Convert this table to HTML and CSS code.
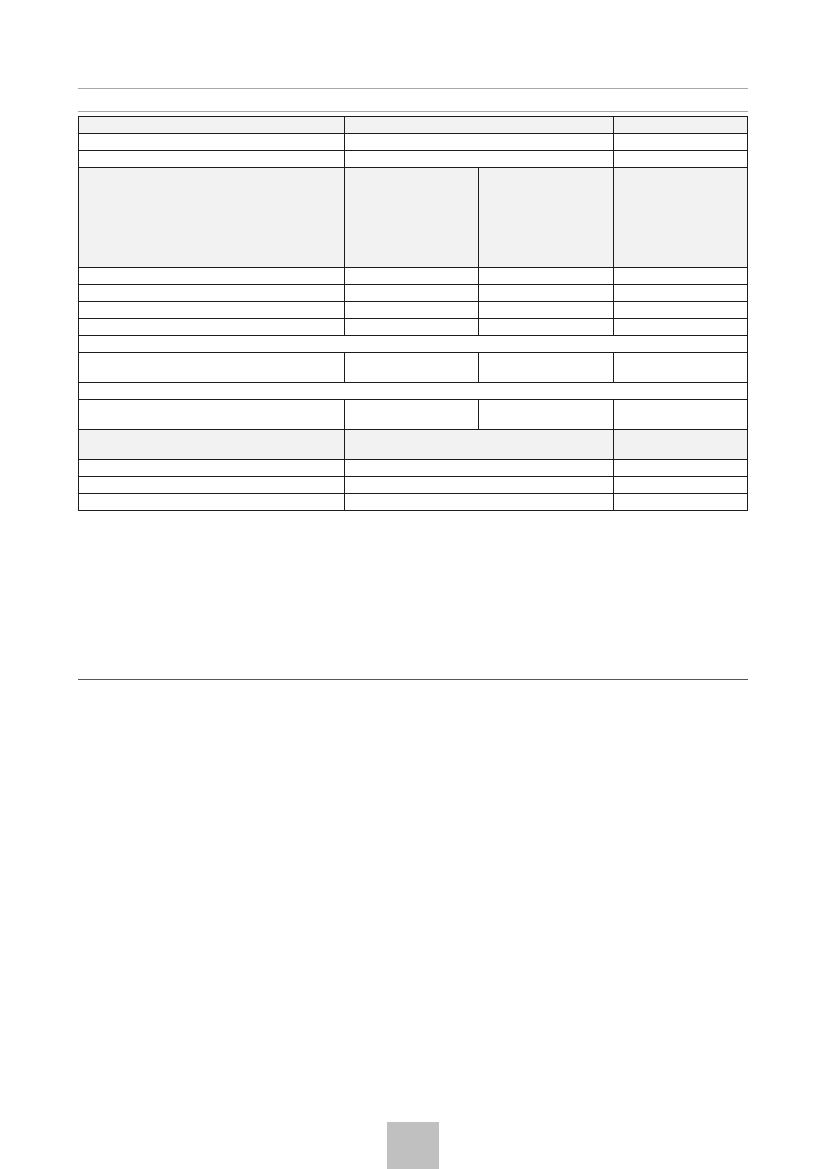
FILE: index.html
```html
<!DOCTYPE html>
<html>
<head>
<meta charset="utf-8">
<link rel="stylesheet" href="styles.css">
</head>
<body>
<div class="page">
  <div class="rule rule-top"></div>
  <div class="rule rule-second"></div>
  <div class="sheet">
    <div class="cell shade"></div><div class="cell shade span2"></div><div class="cell shade"></div>
    <div class="cell"></div><div class="cell span2"></div><div class="cell"></div>
    <div class="cell"></div><div class="cell span2"></div><div class="cell"></div>
    <div class="cell shade"></div><div class="cell shade"></div><div class="cell shade"></div><div class="cell shade"></div>
    <div class="cell"></div><div class="cell"></div><div class="cell"></div><div class="cell"></div>
    <div class="cell"></div><div class="cell"></div><div class="cell"></div><div class="cell"></div>
    <div class="cell"></div><div class="cell"></div><div class="cell"></div><div class="cell"></div>
    <div class="cell"></div><div class="cell"></div><div class="cell"></div><div class="cell"></div>
    <div class="cell span4"></div>
    <div class="cell"></div><div class="cell"></div><div class="cell"></div><div class="cell"></div>
    <div class="cell span4"></div>
    <div class="cell"></div><div class="cell"></div><div class="cell"></div><div class="cell"></div>
    <div class="cell shade"></div><div class="cell shade span2"></div><div class="cell shade"></div>
    <div class="cell"></div><div class="cell span2"></div><div class="cell"></div>
    <div class="cell"></div><div class="cell span2"></div><div class="cell"></div>
    <div class="cell"></div><div class="cell span2"></div><div class="cell"></div>
  </div>
  <div class="rule rule-bottom"></div>
</div>
<div class="footer-tab"></div>
</body>
</html>
```
FILE: styles.css
```css
html, body {
  margin: 0;
  padding: 0;
  background: #ffffff;
  font-family: "Liberation Sans", Arial, sans-serif;
}
body {
  width: 827px;
  height: 1169px;
  position: relative;
  overflow: hidden;
}
.page {
  padding: 88px 79px 0 78px;
}
.rule {
  height: 0;
  border-top: 1px solid #a8a8a8;
}
.rule-second {
  margin-top: 22px;
}
.sheet {
  margin-top: 4px;
  display: grid;
  grid-template-columns: 265px 133px 134px 133px;
  grid-template-rows: 16px 16px 16px 99px 16px 16px 16px 16px 16px 29px 16px 29px 29px 16px 16px 16px;
  gap: 1px;
  padding: 1px;
  background: #1c1c1c;
  width: 668px;
}
.cell {
  background: #ffffff;
}
.cell.shade {
  background: #f2f2f2;
}
.span2 {
  grid-column: span 2;
}
.span4 {
  grid-column: span 4;
}
.rule-bottom {
  margin-top: 168px;
  border-top: 1px solid #555555;
}
.footer-tab {
  position: absolute;
  left: 387px;
  top: 1122px;
  width: 52px;
  height: 47px;
  background: #c0c0c0;
}
```
